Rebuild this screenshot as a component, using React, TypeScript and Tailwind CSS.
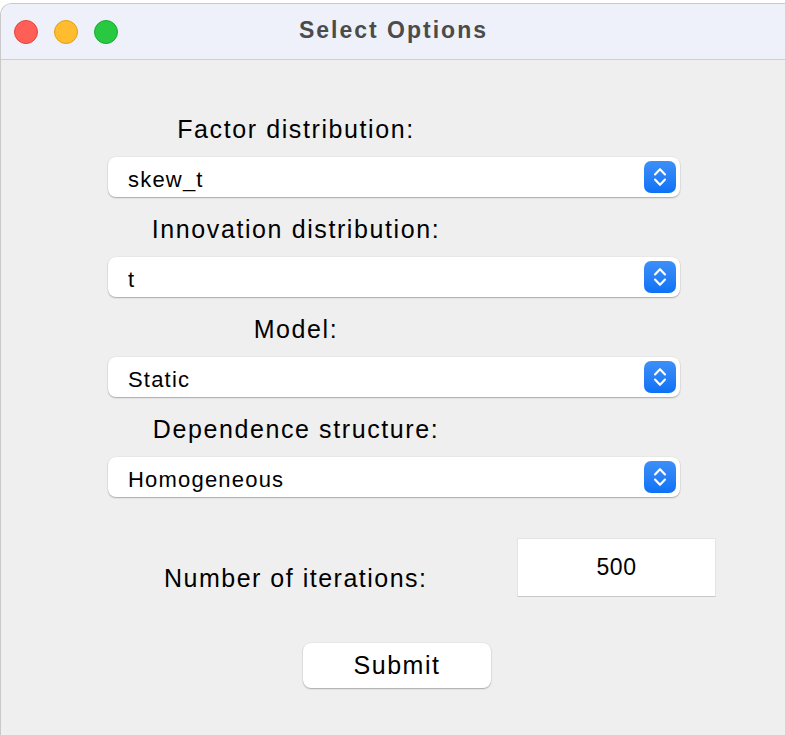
import React from "react";

const font = { fontFamily: '"Liberation Sans", Arial, Helvetica, sans-serif' };

function Chevrons() {
  return (
    <div className="flex h-[32px] w-[32px] items-center justify-center rounded-[7px] bg-gradient-to-b from-[#3d8ff8] to-[#0a72f5]">
      <svg width="16" height="24" viewBox="0 0 16 24" fill="none">
        <path d="M3 9.5 L8 4.2 L13 9.5" stroke="white" strokeWidth="2.1" strokeLinecap="round" strokeLinejoin="round" />
        <path d="M3 14.5 L8 19.8 L13 14.5" stroke="white" strokeWidth="2.1" strokeLinecap="round" strokeLinejoin="round" />
      </svg>
    </div>
  );
}

function Group({ label, value, first }: { label: string; value: string; first?: boolean }) {
  return (
    <div className={first ? "" : "mt-[13px]"}>
      <div className="flex h-[40px] w-[376px] items-center justify-center text-[25px] tracking-[1.6px] text-black">{label}</div>
      <div className="mt-[7px] flex h-[40px] w-[572px] items-center justify-between rounded-[8px] bg-white pl-[20px] pr-[4px] shadow-[0_1px_1.5px_rgba(0,0,0,0.28),0_0_0_0.5px_rgba(0,0,0,0.06)]">
        <span className="pt-[4px] text-[22px] tracking-[1.2px] text-black">{value}</span>
        <Chevrons />
      </div>
    </div>
  );
}

export default function App() {
  return (
    <div className="min-h-[735px] w-[785px] overflow-hidden bg-white" style={font}>
      <div className="mt-[3px] h-[732px] w-[800px] overflow-hidden rounded-t-[12px] border-t border-l border-[#c9c9c9] bg-[#efefef]">
        <div className="relative flex h-[56px] items-center border-b border-[#cfcfcf] bg-[#eef1f9] pb-[3px]">
          <div className="absolute left-[13px] top-[16px] flex gap-[16px]">
            <div className="h-[24px] w-[24px] rounded-full border border-[#e2463f] bg-[#ff5f57]" />
            <div className="h-[24px] w-[24px] rounded-full border border-[#e1a116] bg-[#febc2e]" />
            <div className="h-[24px] w-[24px] rounded-full border border-[#14ae34] bg-[#28c840]" />
          </div>
          <div className="w-[785px] text-center text-[23px] font-bold tracking-[2px] text-[#4b4b4b]">Select Options</div>
        </div>
        <div className="pl-[107px] pt-[50px]">
          <Group label="Factor distribution:" value="skew_t" first />
          <Group label="Innovation distribution:" value="t" />
          <Group label="Model:" value="Static" />
          <Group label="Dependence structure:" value="Homogeneous" />
          <div className="mt-[41px] flex items-start">
            <div className="ml-[56px] mt-[27px] w-[353px] text-[25px] leading-[26px] tracking-[1.5px] text-black">Number of iterations:</div>
            <div className="flex h-[59px] w-[199px] items-start justify-center border border-[#e4e4e4] border-b-[#c8c8c8] bg-white pt-[15px] text-[23px] leading-[26px] tracking-[0.5px] text-black">500</div>
          </div>
          <div className="mt-[46px] ml-[195px] flex h-[45px] w-[188px] items-center justify-center rounded-[8px] bg-white text-[25px] tracking-[1.5px] text-black shadow-[0_1px_1.5px_rgba(0,0,0,0.28),0_0_0_0.5px_rgba(0,0,0,0.06)]">Submit</div>
        </div>
      </div>
    </div>
  );
}
